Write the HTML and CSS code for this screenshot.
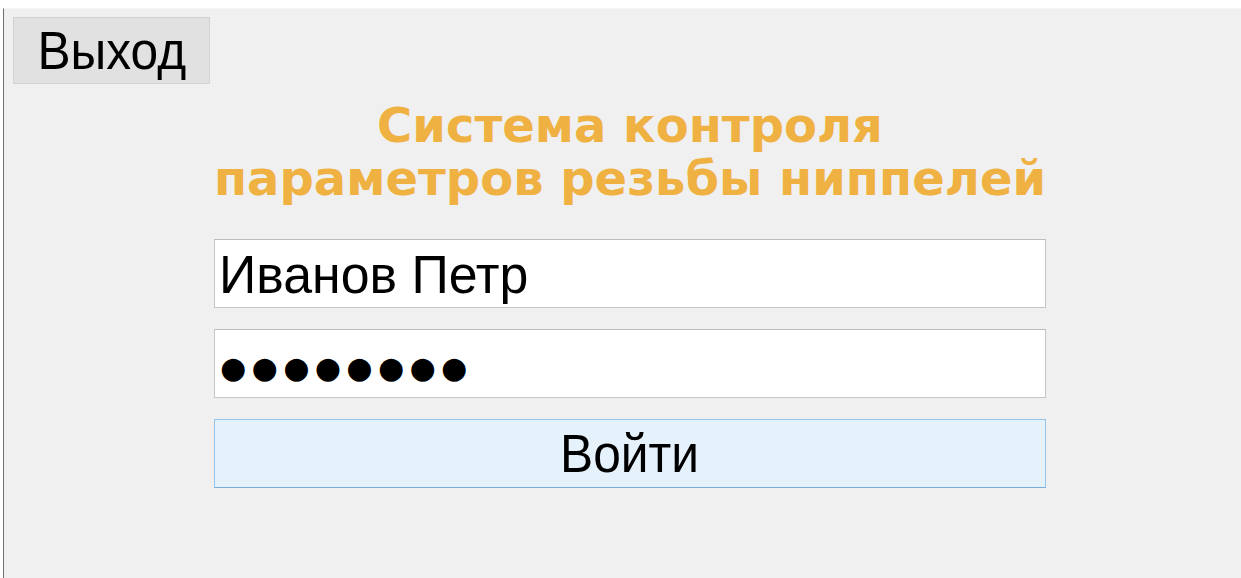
FILE: index.html
```html
<!DOCTYPE html>
<html lang="ru">
<head>
<meta charset="utf-8">
<title>Вход</title>
<link rel="stylesheet" href="styles.css">
</head>
<body>
  <div class="window">
    <button class="exit-btn" type="button"><span class="label">Выход</span></button>
    <main class="login-form">
      <h1 class="title">Система контроля<br>параметров резьбы ниппелей</h1>
      <div class="field"><span class="label">Иванов Петр</span></div>
      <div class="field field-password"><span class="dots">●●●●●●●●</span></div>
      <button class="login-btn" type="button"><span class="label">Войти</span></button>
    </main>
  </div>
</body>
</html>
```

FILE: styles.css
```css
html, body {
  margin: 0;
  height: 100%;
  background: #ffffff;
}

body {
  font-family: "Liberation Sans", Arial, sans-serif;
  color: #000;
  overflow: hidden;
}

/* form window */
.window {
  box-sizing: border-box;
  margin: 8px 0 0 3px;
  height: calc(100% - 8px);
  border-left: 1px solid #6f6f6f;
  border-top: 1px solid #f6f6f6;
  background: #f0f0f0;
  padding: 8px 0 0 9px;
}

.label {
  display: inline-block;
  transform: scaleX(0.92);
}

.exit-btn {
  box-sizing: border-box;
  width: 197px;
  height: 67px;
  margin: 0;
  padding: 0 0 2px;
  border: 1px solid #d2d2d2;
  background: #e1e1e1;
  font: 54px/1 "Liberation Sans", Arial, sans-serif;
  color: #000;
  display: flex;
  align-items: center;
  justify-content: center;
}

.login-form {
  width: 832px;
  margin: 15px 0 0 201px;
  display: flex;
  flex-direction: column;
  gap: 21px;
}

.title {
  margin: 0 -40px 13px;
  white-space: nowrap;
  font-family: "DejaVu Sans", "Open Sans", sans-serif;
  font-weight: 700;
  font-size: 48px;
  line-height: 53px;
  color: #efb142;
  text-align: center;
}

.field {
  box-sizing: border-box;
  height: 69px;
  background: #ffffff;
  border: 1px solid #c6c6c6;
  border-top-color: #bdbdbd;
  display: flex;
  align-items: center;
  padding: 0 0 0 4px;
  font-size: 54px;
  line-height: 1;
}

.field .label {
  transform: scaleX(0.96);
  transform-origin: left center;
}

.dots {
  font-family: "DejaVu Sans", sans-serif;
  font-size: 30px;
  letter-spacing: 5.4px;
  padding-top: 8px;
  margin-left: 1px;
}

.login-btn {
  box-sizing: border-box;
  height: 69px;
  margin: 0;
  padding: 0 0 2px;
  border: 1px solid #94c3ec;
  border-bottom-color: #78acdc;
  background: #e5f1fb;
  font: 54px/1 "Liberation Sans", Arial, sans-serif;
  color: #000;
  display: flex;
  align-items: center;
  justify-content: center;
}
```
